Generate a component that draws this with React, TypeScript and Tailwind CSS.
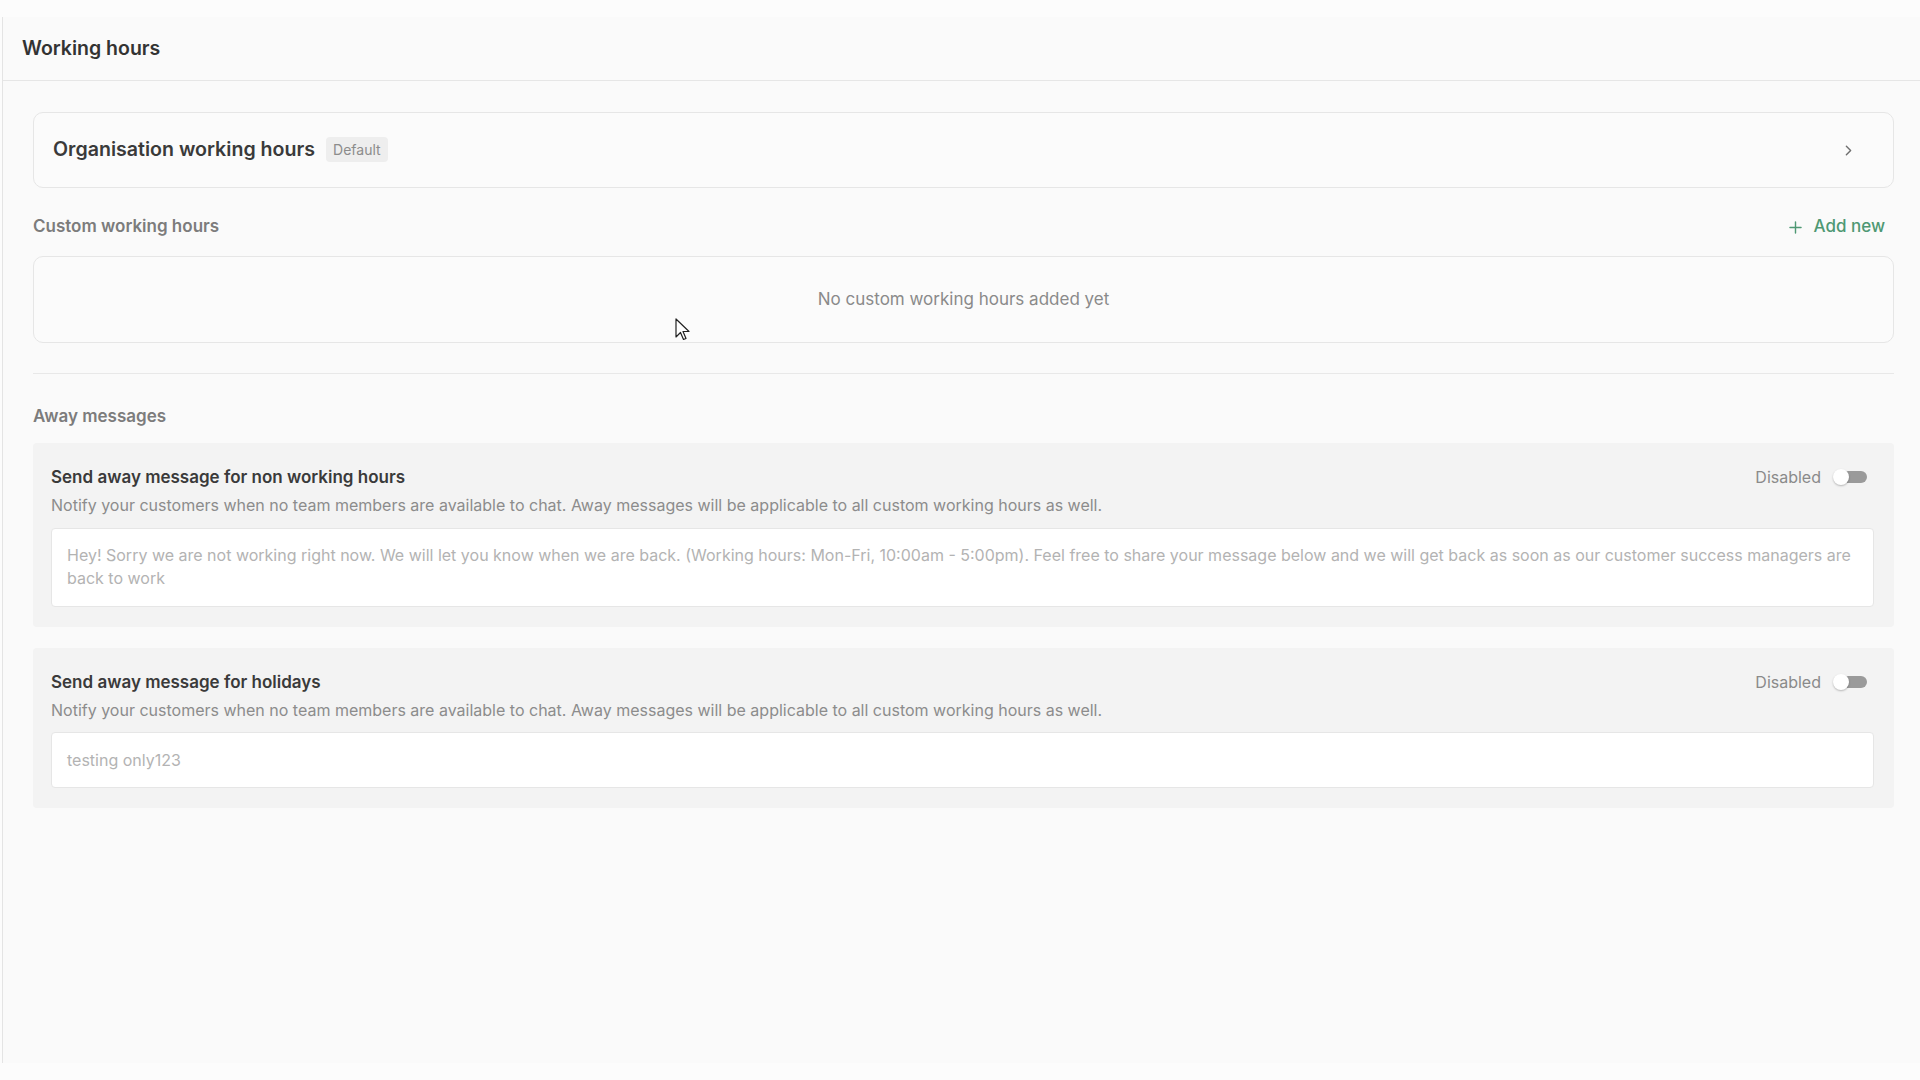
import React from 'react';
import { ChevronRight, Plus } from 'lucide-react';

// --- small pieces ---

const Toggle: React.FC = () => (
  <div className="relative flex h-[16px] w-[34px] items-center">
    <div className="ml-[4px] h-[12px] w-[30px] rounded-full bg-[#9a9a9a]" />
    <div className="absolute left-0 top-0 h-[16px] w-[16px] rounded-full bg-white shadow-[0_1px_2px_rgba(0,0,0,0.25)]" />
  </div>
);

type AwayCardProps = {
  title: string;
  message: string;
  tall?: boolean;
};

const AwayCard: React.FC<AwayCardProps> = ({ title, message, tall }) => (
  <div className="rounded-[4px] bg-[#f3f3f3] pl-[18px] pr-[20px] pt-[22px] pb-[20px]">
    <div className="flex items-center justify-between">
      <h3 className="text-[17px] leading-[24px] font-semibold text-[#3a3a3a]">{title}</h3>
      <div className="mr-[7px] flex items-center gap-[12px]">
        <span className="text-[16px] leading-[22px] text-[#8a8a8a]">Disabled</span>
        <Toggle />
      </div>
    </div>
    <p className="mt-[4px] text-[16px] leading-[24px] text-[#8c8c8c]">
      Notify your customers when no team members are available to chat. Away messages will be applicable to all custom working hours as well.
    </p>
    <div
      className={
        tall
          ? 'mt-[11px] h-[79px] rounded-[4px] border border-[#e6e6e6] bg-white px-[15px] pt-[15px] text-[16px] leading-[23px] text-[#b3b3b3]'
          : 'mt-[10px] flex h-[56px] items-center rounded-[4px] border border-[#e6e6e6] bg-white px-[15px] text-[16px] leading-[23px] text-[#b3b3b3]'
      }
    >
      {message}
    </div>
  </div>
);

// --- page ---

const App: React.FC = () => {
  return (
    <div
      className="relative h-[1080px] w-full overflow-hidden bg-[#fcfcfc]"
      style={{ fontFamily: 'Inter, "Noto Sans", sans-serif' }}
    >
      <div className="ml-[2px] mt-[17px] flex h-[1046px] flex-col border-l border-[#e4e4e4] bg-[#fafafa]">
        {/* Header */}
        <div className="flex h-[64px] shrink-0 items-center border-b border-[#e6e6e6] pl-[19px]">
          <h1 className="text-[19.5px] font-semibold text-[#333333]">Working hours</h1>
        </div>

        <div className="flex flex-col pl-[30px] pr-[26px] pt-[31px]">
          {/* Organisation working hours */}
          <div className="flex h-[76px] items-center justify-between rounded-[10px] border border-[#e6e6e6] bg-[#fbfbfb] pl-[19px] pr-[36px]">
            <div className="flex items-center gap-[11px]">
              <span className="text-[19.6px] font-semibold text-[#3a3a3a]">Organisation working hours</span>
              <span className="rounded-[4px] bg-[#eeeeee] px-[7px] py-[3px] text-[14px] leading-[19px] text-[#8c8c8c]">
                Default
              </span>
            </div>
            <ChevronRight className="h-[17px] w-[17px] text-[#6f6f6f]" strokeWidth={2} />
          </div>

          {/* Custom working hours */}
          <div className="mt-[27px] flex h-[24px] items-center justify-between">
            <span className="text-[17px] font-semibold text-[#7c7c7c]">Custom working hours</span>
            <button className="mr-[9px] flex items-center gap-[9px] text-[17px] font-medium text-[#4e9873]">
              <Plus className="h-[19px] w-[19px]" strokeWidth={1.8} />
              Add new
            </button>
          </div>
          <div className="mt-[17px] flex h-[87px] items-center justify-center rounded-[10px] border border-[#e6e6e6] bg-[#fbfbfb]">
            <span className="text-[17px] text-[#8a8a8a]">No custom working hours added yet</span>
          </div>

          <div className="mt-[30px] border-t border-[#e8e8e8]" />

          {/* Away messages */}
          <div className="mt-[31px] flex h-[24px] items-center">
            <span className="text-[17px] font-semibold text-[#7c7c7c]">Away messages</span>
          </div>

          <div className="mt-[14px] flex flex-col gap-[21px]">
            <AwayCard
              title="Send away message for non working hours"
              message="Hey! Sorry we are not working right now. We will let you know when we are back. (Working hours: Mon-Fri, 10:00am - 5:00pm). Feel free to share your message below and we will get back as soon as our customer success managers are back to work"
              tall
            />
            <AwayCard title="Send away message for holidays" message="testing only123" />
          </div>
        </div>
      </div>

      {/* mouse pointer */}
      <svg
        className="absolute left-[675px] top-[318px]"
        width="16"
        height="24"
        viewBox="0 0 16 24"
      >
        <path
          d="M1 1 L1 19 L5.5 14.5 L8.5 21.5 L11 20.5 L8 13.5 L14 13.5 Z"
          fill="#ffffff"
          stroke="#222222"
          strokeWidth="1.2"
          strokeLinejoin="round"
        />
      </svg>
    </div>
  );
};

export default App;
